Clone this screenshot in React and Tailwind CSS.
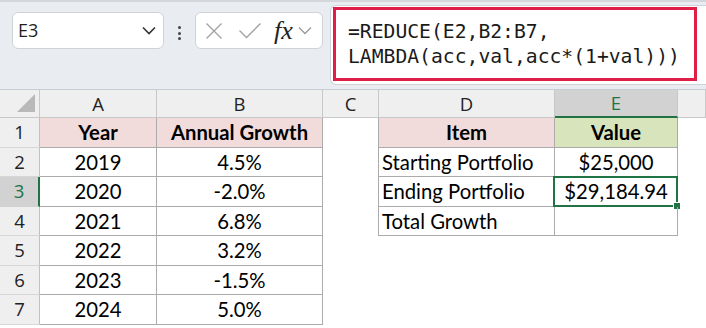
import React from 'react';

const cellFont = { fontFamily: 'Lato, "Noto Sans", sans-serif' };

const colHeads = [
  { label: '', corner: true },
  { label: 'A' },
  { label: 'B' },
  { label: 'C' },
  { label: 'D' },
  { label: 'E', active: true },
  { label: '' },
];

const years = [
  ['2019', '4.5%'],
  ['2020', '-2.0%'],
  ['2021', '6.8%'],
  ['2022', '3.2%'],
  ['2023', '-1.5%'],
  ['2024', '5.0%'],
];

const summary = [
  ['Starting Portfolio', '$25,000'],
  ['Ending Portfolio', '$29,184.94'],
  ['Total Growth', ''],
];

const Toolbar = () => (
  <div className="flex h-[90px] items-start border-t-2 border-b border-t-[#d3d6da] border-b-[#c9ccd0] bg-[#e9ecf0]">
    {/* name box */}
    <div className="ml-[12px] mt-[10px] flex h-[37px] w-[152px] items-center justify-between rounded-[6px] border border-[#cfd2d6] bg-white pl-[5px] pr-[7px]">
      <span className="text-[18px] text-[#1f1f1f]" style={{ fontFamily: '"Open Sans", "Noto Sans", sans-serif' }}>E3</span>
      <svg width="14" height="9" viewBox="0 0 14 9" fill="none">
        <path d="M1 1.5 L7 7.5 L13 1.5" stroke="#333" strokeWidth="1.6" />
      </svg>
    </div>

    {/* dots */}
    <div className="ml-[14px] mt-[24px] flex flex-col gap-[2.5px]">
      <span className="h-[3px] w-[3px] rounded-full bg-[#444]" />
      <span className="h-[3px] w-[3px] rounded-full bg-[#444]" />
      <span className="h-[3px] w-[3px] rounded-full bg-[#444]" />
    </div>

    {/* cancel / enter / fx */}
    <div className="ml-[14px] mt-[10px] flex h-[37px] w-[128px] items-center rounded-[6px] border border-[#cfd2d6] bg-white pl-[9px]">
      <svg width="18" height="18" viewBox="0 0 18 18" fill="none">
        <path d="M1.5 1.5 L16.5 16.5 M16.5 1.5 L1.5 16.5" stroke="#a3a3a3" strokeWidth="1.4" />
      </svg>
      <svg className="ml-[15px]" width="24" height="17" viewBox="0 0 24 17" fill="none">
        <path d="M1.5 8.5 L8.5 15.5 L22.5 1.5" stroke="#a3a3a3" strokeWidth="1.4" />
      </svg>
      <span
        className="ml-[12px] text-[26px] italic leading-none text-[#222]"
        style={{ fontFamily: '"Liberation Serif", "DejaVu Serif", serif' }}
      >
        fx
      </span>
      <svg className="ml-[5px]" width="14" height="9" viewBox="0 0 14 9" fill="none">
        <path d="M1 1.5 L7 7.5 L13 1.5" stroke="#9a9a9a" strokeWidth="1.3" />
      </svg>
    </div>

    {/* formula bar */}
    <div className="ml-[7px] mt-[3px] h-[80px] flex-1 rounded-l-[6px] border border-r-0 border-[#cfd2d6] bg-white pl-[2px] pt-[1px]">
      <div
        className="h-[74px] w-[364px] border-[3px] border-[#df1f47] pl-[12px] pt-[9px] text-[19.7px] leading-[25px] text-[#1a1a1a]"
        style={{ fontFamily: '"DejaVu Sans Mono", "Liberation Mono", monospace' }}
      >
        <div>=REDUCE(E2,B2:B7,</div>
        <div>LAMBDA(acc,val,acc*(1+val)))</div>
      </div>
    </div>
  </div>
);

const ColHeader = ({ label, corner, active }) => (
  <div
    className={
      active
        ? 'flex items-center justify-center border-r border-b-2 border-r-[#c8c8c8] border-b-[#217346] bg-[#d2d2d2] text-[18.5px] text-[#217346]'
        : 'relative flex items-center justify-center border-r border-b border-[#c8c8c8] bg-[#efefef] text-[18.5px] text-[#222]'
    }
    style={{ fontFamily: '"Open Sans", "Noto Sans", sans-serif' }}
  >
    {corner ? (
      <svg className="absolute bottom-[5px] right-[4px]" width="18" height="18" viewBox="0 0 18 18">
        <path d="M18 0 L18 18 L0 18 Z" fill="#b9b9b9" />
      </svg>
    ) : (
      label
    )}
  </div>
);

const RowHeader = ({ n, active }) => (
  <div
    className={
      active
        ? 'flex items-center justify-center border-r-2 border-b border-r-[#217346] border-b-[#d0d0d0] bg-[#d2d2d2] text-[18.5px] text-[#217346]'
        : 'flex items-center justify-center border-r border-b border-r-[#c0c0c0] border-b-[#d6d6d6] bg-[#efefef] text-[18.5px] text-[#222]'
    }
    style={{ fontFamily: '"Open Sans", "Noto Sans", sans-serif' }}
  >
    {n}
  </div>
);

export default function App() {
  return (
    <div className="relative h-[328px] w-[706px] overflow-hidden bg-white">
      <Toolbar />

      <div className="grid grid-cols-[40px_117px_166px_56px_176px_123px_28px] grid-rows-[28px_repeat(7,29.5px)]" style={cellFont}>
        {colHeads.map((h, i) => (
          <ColHeader key={i} {...h} />
        ))}

        {/* row 1: headers */}
        <RowHeader n={1} />
        <div className="flex items-center justify-center border-r border-b border-[#ababab] bg-[#f2dcdb] text-[20.3px] font-bold text-black">Year</div>
        <div className="flex items-center justify-center border-r border-b border-[#ababab] bg-[#f2dcdb] text-[20.3px] font-bold text-black">Annual Growth</div>
        <div className="border-r border-[#ababab]" />
        <div className="flex items-center justify-center border-r border-b border-[#ababab] bg-[#f2dcdb] text-[20.3px] font-bold text-black">Item</div>
        <div className="flex items-center justify-center border-r border-b border-[#ababab] bg-[#d8e4bc] text-[20.3px] font-bold text-black">Value</div>
        <div />

        {years.map(([year, growth], i) => {
          const row = i + 2;
          const s = summary[i];
          return (
            <React.Fragment key={year}>
              <RowHeader n={row} active={row === 3} />
              <div className="flex items-center justify-center border-r border-b border-[#ababab] text-[20.3px] text-black">{year}</div>
              <div className="flex items-center justify-center border-r border-b border-[#ababab] text-[20.3px] text-black">{growth}</div>
              {s ? (
                <>
                  <div className="border-r border-[#ababab]" />
                  <div className="flex items-center border-r border-b border-[#ababab] pl-[3px] text-[20.3px] text-black">{s[0]}</div>
                  <div className="relative flex items-center justify-center border-r border-b border-[#ababab] text-[20.3px] text-black">
                    {s[1]}
                    {row === 3 && (
                      <div className="absolute -top-[1px] -left-[2px] -right-[1px] -bottom-[1px] border-2 border-[#217346]">
                        <span className="absolute -right-[5px] -bottom-[5px] h-[8px] w-[8px] border border-white bg-[#217346]" />
                      </div>
                    )}
                  </div>
                  <div />
                </>
              ) : (
                <>
                  <div />
                  <div />
                  <div />
                  <div />
                </>
              )}
            </React.Fragment>
          );
        })}
      </div>
    </div>
  );
}
